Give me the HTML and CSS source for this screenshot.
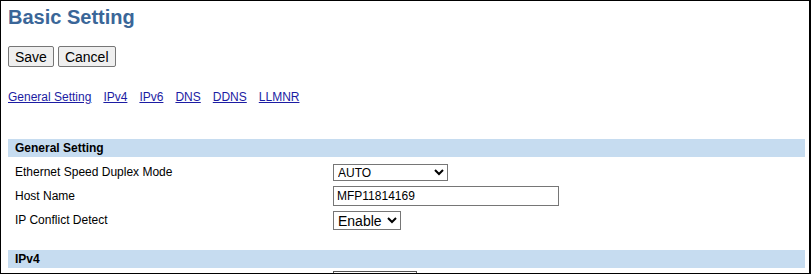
FILE: index.html
```html
<!DOCTYPE html>
<html>
  <head>
    <meta charset="utf-8" />
    <title>Basic Setting</title>
    <link rel="stylesheet" href="styles.css">
  </head>
  <body>
    <div class="frame">
      <h1 class="title">Basic Setting</h1>

      <div class="actions">
        <button type="button">Save</button>
        <button type="button">Cancel</button>
      </div>

      <div class="tabs">
        <a href="#general">General Setting</a>
        <a href="#ipv4">IPv4</a>
        <a href="#ipv6">IPv6</a>
        <a href="#dns">DNS</a>
        <a href="#ddns">DDNS</a>
        <a href="#llmnr">LLMNR</a>
      </div>

      <!-- General Setting -->
      <div class="section" id="general">
        <div class="section-head">General Setting</div>
        <div class="row">
          <div class="label">Ethernet Speed Duplex Mode</div>
          <div class="value">
            <select class="sel-speed">
              <option>AUTO</option>
              <option>100BASE-TX Full</option>
              <option>100BASE-TX Half</option>
              <option>10BASE-T Full</option>
              <option>10BASE-T Half</option>
            </select>
          </div>
        </div>
        <div class="row">
          <div class="label">Host Name</div>
          <div class="value">
            <input class="txt-host" type="text" value="MFP11814169">
          </div>
        </div>
        <div class="row">
          <div class="label">IP Conflict Detect</div>
          <div class="value">
            <select class="sel-small">
              <option>Enable</option>
              <option>Disable</option>
            </select>
          </div>
        </div>
      </div>

      <!-- IPv4 -->
      <div class="section" id="ipv4">
        <div class="section-head">IPv4</div>
        <div class="row row-edge">
          <div class="label"></div>
          <div class="value">
            <span class="box-edge"></span>
          </div>
        </div>
      </div>
    </div>
  </body>
</html>
```

FILE: styles.css
```css
body {
  margin: 0;
  background-color: #ffffff;
  font-family: "Liberation Sans", Arial, sans-serif;
  color: #000000;
}

.frame {
  box-sizing: border-box;
  width: 811px;
  height: 274px;
  border: 1px solid #000000;
  border-right-width: 2px;
  padding: 0 4px 0 7px;
  overflow: hidden;
}

.title {
  margin: 5px 0 0 0;
  font-size: 20px;
  line-height: 23px;
  font-weight: bold;
  color: #3a6698;
}

.actions {
  display: flex;
  gap: 4px;
  margin-top: 17px;
}
.actions button {
  height: 21px;
  padding: 0 6px;
  font-family: "Liberation Sans", Arial, sans-serif;
  font-size: 14px;
  color: #000000;
  background-color: #efefef;
  border: 1px solid #767676;
  border-radius: 2px;
}

.tabs {
  display: flex;
  gap: 12px;
  margin-top: 23px;
  font-size: 12px;
  line-height: 14px;
}
.tabs a {
  color: #1c1ca3;
}

.section {
  margin-top: 35px;
}
#ipv4 {
  margin-top: 18px;
}

.section-head {
  height: 18px;
  line-height: 18px;
  padding-left: 7px;
  background-color: #c6dcf0;
  font-size: 12px;
  font-weight: bold;
  margin-bottom: 3px;
}

.row {
  display: flex;
  align-items: center;
  height: 24px;
  font-size: 12px;
}
.row-edge {
  align-items: flex-start;
}
.label {
  box-sizing: border-box;
  width: 325px;
  padding-left: 7px;
}

.value select,
.value input {
  box-sizing: border-box;
  font-family: "Liberation Sans", Arial, sans-serif;
  color: #000000;
  background-color: #ffffff;
  border: 1px solid #767676;
  border-radius: 0;
  margin: 0;
}

.sel-speed {
  width: 115px;
  height: 17px;
  font-size: 12px;
}
.txt-host {
  width: 226px;
  height: 20px;
  padding: 1px 3px;
  font-size: 12px;
}
.sel-small {
  width: 68px;
  height: 19px;
  font-size: 14px;
}

/* top of the next field, cut by the window edge */
.box-edge {
  display: block;
  box-sizing: border-box;
  width: 84px;
  height: 19px;
  border: 1px solid #555555;
}
```
